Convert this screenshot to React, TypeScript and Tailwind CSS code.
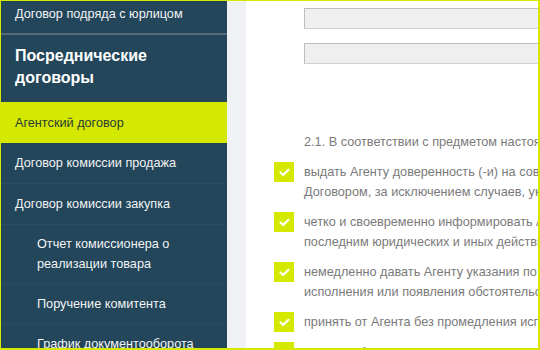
import React from "react"

const font = { fontFamily: '"Liberation Sans", Arial, sans-serif' }

const checks = [
  [
    "выдать Агенту доверенность (-и) на совершение юридических и иных действий, предусмотренных настоящим",
    "Договором, за исключением случаев, указанных в настоящем Договоре;",
  ],
  [
    "четко и своевременно информировать Агента о всех изменениях, влияющих на совершение",
    "последним юридических и иных действий по настоящему Договору;",
  ],
  [
    "немедленно давать Агенту указания по исполнению настоящего Договора в случае неясности",
    "исполнения или появления обстоятельств, требующих таких указаний;",
  ],
  ["принять от Агента без промедления исполненное по настоящему Договору;"],
  ["уплатить Агенту вознаграждение в размере и порядке, предусмотренных настоящим Договором;"],
]

function Check() {
  return (
    <div className="w-5 h-5 shrink-0 bg-[#d4e800] flex items-center justify-center">
      <svg width="11" height="9" viewBox="0 0 11 9" fill="none">
        <path d="M1.5 4.5 L4.2 7 L9.5 1.8" stroke="white" strokeWidth="2.2" strokeLinecap="round" strokeLinejoin="round" />
      </svg>
    </div>
  )
}

export default function App() {
  return (
    <div
      style={font}
      className="w-[540px] h-[350px] overflow-hidden flex border-t border-l border-r-2 border-b-2 border-[#d4e800] bg-white"
    >
      {/* sidebar */}
      <div className="w-[226px] shrink-0 bg-[#23465a] text-[12.7px] leading-[20px] text-[#f2f4f5] flex flex-col overflow-hidden">
        <div className="h-[34px] shrink-0 pl-[14px] pt-[3px] border-b-2 border-[#5a6b77]">
          Договор подряда с юрлицом
        </div>
        <div className="shrink-0 pl-[14px] pr-4 pt-[10px] pb-[13px] text-[16px] leading-[22px] font-bold text-white">
          Посреднические договоры
        </div>
        <div className="h-[41px] shrink-0 pl-[14px] flex items-center bg-[#d4e800] text-[#2b3b36]">
          Агентский договор
        </div>
        <div className="h-[41px] shrink-0 pl-[14px] flex items-center border-b border-[#2a4d62]">
          Договор комиссии продажа
        </div>
        <div className="h-[41px] shrink-0 pl-[14px] flex items-center border-b border-[#2a4d62]">
          Договор комиссии закупка
        </div>
        <div className="h-[59px] shrink-0 pl-[36px] pr-6 flex items-center border-b border-[#2a4d62]">
          Отчет комиссионера о реализации товара
        </div>
        <div className="h-[40px] shrink-0 pl-[36px] flex items-center border-b border-[#2a4d62]">
          Поручение комитента
        </div>
        <div className="h-[40px] shrink-0 pl-[36px] flex items-center whitespace-nowrap">
          График документооборота
        </div>
      </div>

      <div className="w-[19px] shrink-0 bg-[#f0f1f5]" />

      {/* content */}
      <div className="flex-1 overflow-hidden pl-[28px] pt-[7px] text-[12.7px] leading-[20px] text-[#7a7a7a]">
        <div className="ml-[30px] w-[400px] h-[21px] bg-[#efefef] border border-[#d2d2d2] border-t-[#bdbdbd] border-l-[#bdbdbd]" />
        <div className="ml-[30px] mt-[14px] w-[400px] h-[21px] bg-[#efefef] border border-[#d2d2d2] border-t-[#bdbdbd] border-l-[#bdbdbd]" />

        <p className="ml-[30px] mt-[68px] whitespace-nowrap">
          2.1. В соответствии с предметом настоящего Договора Принципал обязуется:
        </p>

        <div className="mt-[10px] flex flex-col gap-[10px]">
          {checks.map((lines, i) => (
            <div key={i} className="flex gap-[10px]">
              <Check />
              <div className="whitespace-nowrap">
                {lines.map((l, j) => (
                  <div key={j}>{l}</div>
                ))}
              </div>
            </div>
          ))}
        </div>
      </div>
    </div>
  )
}
